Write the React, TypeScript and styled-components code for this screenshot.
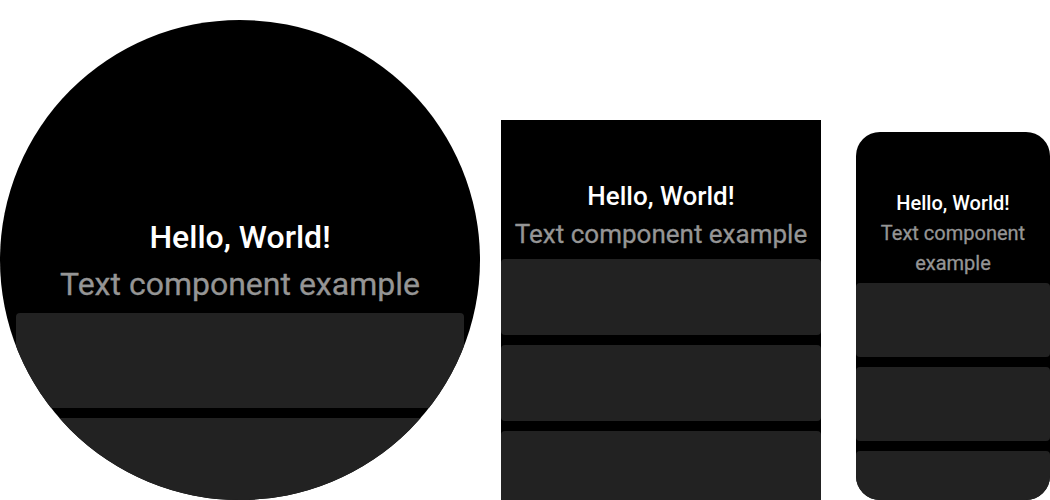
import styled, {createGlobalStyle} from 'styled-components';

const GlobalStyle = createGlobalStyle`
    html, body {
        margin: 0;
        padding: 0;
        background: #ffffff;
        font-family: Roboto, "Noto Sans", sans-serif;
    }
`;

const Page = styled.div`
    display: flex;
    align-items: flex-end;
    width: 1050px;
    height: 500px;
    overflow: hidden;
`;

interface ScreenProps {
    $width: number;
    $height: number;
    $radius: string;
    $gapLeft: number;
    $padX: number;
    $padTop: number;
}

const Screen = styled.div<ScreenProps>`
    flex: none;
    width: ${props => props.$width}px;
    height: ${props => props.$height}px;
    margin-left: ${props => props.$gapLeft}px;
    padding: ${props => props.$padTop}px ${props => props.$padX}px 0;
    box-sizing: border-box;
    border-radius: ${props => props.$radius};
    background: #000000;
    overflow: hidden;
    display: flex;
    flex-direction: column;
`;

const Title = styled.div<{ $size: number; $line: number }>`
    color: #ffffff;
    font-weight: 500;
    font-size: ${props => props.$size}px;
    line-height: ${props => props.$line}px;
    text-align: center;
`;

const Subtitle = styled.div<{ $size: number; $line: number }>`
    color: #959595;
    font-weight: 400;
    font-size: ${props => props.$size}px;
    line-height: ${props => props.$line}px;
    text-align: center;
    -webkit-text-stroke: 0.3px #959595;
`;

const CardList = styled.div<{ $top: number }>`
    display: flex;
    flex-direction: column;
    gap: 10px;
    margin-top: ${props => props.$top}px;
`;

const Card = styled.div<{ $height: number }>`
    flex: none;
    height: ${props => props.$height}px;
    background: #222222;
    border-radius: 4px;
`;

interface IDevice {
    id: string;
    width: number;
    height: number;
    radius: string;
    gapLeft: number;
    padX: number;
    padTop: number;
    font: number;
    line: number;
    cardTop: number;
    cardHeight: number;
}

// 세 가지 화면 모양: 원형, 사각형, 둥근 사각형
const devices: IDevice[] = [
    {id: "round", width: 480, height: 480, radius: "50%", gapLeft: 0, padX: 16, padTop: 194, font: 32, line: 47, cardTop: 5, cardHeight: 95},
    {id: "square", width: 320, height: 380, radius: "0", gapLeft: 21, padX: 0, padTop: 57, font: 26, line: 38, cardTop: 6, cardHeight: 76},
    {id: "rect", width: 194, height: 368, radius: "24px", gapLeft: 35, padX: 0, padTop: 56, font: 20, line: 30, cardTop: 5, cardHeight: 74},
];

function App() {
    return (
        <>
            <GlobalStyle/>
            <Page>
                {devices.map((d) => (
                    <Screen key={d.id} $width={d.width} $height={d.height} $radius={d.radius}
                            $gapLeft={d.gapLeft} $padX={d.padX} $padTop={d.padTop}>
                        <Title $size={d.font} $line={d.line}>Hello, World!</Title>
                        <Subtitle $size={d.font} $line={d.line}>Text component example</Subtitle>
                        <CardList $top={d.cardTop}>
                            <Card $height={d.cardHeight}/>
                            <Card $height={d.cardHeight}/>
                            <Card $height={d.cardHeight}/>
                        </CardList>
                    </Screen>
                ))}
            </Page>
        </>
    );
}

export default App;
